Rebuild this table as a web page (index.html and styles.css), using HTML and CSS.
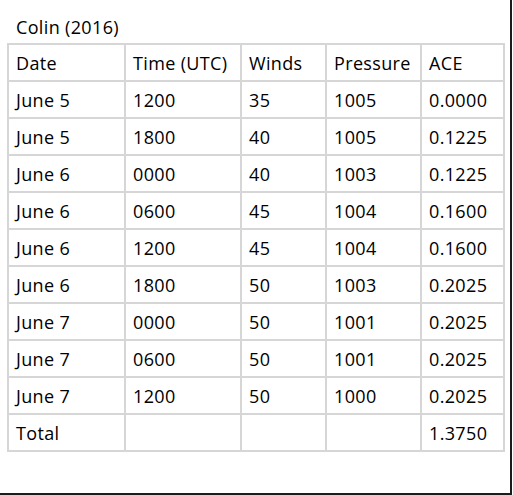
FILE: index.html
```html
<!DOCTYPE html>
<html>
<head>
<meta charset="utf-8">
<link rel="stylesheet" href="styles.css">
</head>
<body>
<div class="frame">
  <div class="caption">Colin (2016)</div>
  <table class="storm">
    <colgroup>
      <col class="c-date"><col class="c-time"><col class="c-winds"><col class="c-pres"><col class="c-ace">
    </colgroup>
    <tr><td>Date</td><td>Time (UTC)</td><td>Winds</td><td>Pressure</td><td>ACE</td></tr>
    <tr><td>June 5</td><td>1200</td><td>35</td><td>1005</td><td>0.0000</td></tr>
    <tr><td>June 5</td><td>1800</td><td>40</td><td>1005</td><td>0.1225</td></tr>
    <tr><td>June 6</td><td>0000</td><td>40</td><td>1003</td><td>0.1225</td></tr>
    <tr><td>June 6</td><td>0600</td><td>45</td><td>1004</td><td>0.1600</td></tr>
    <tr><td>June 6</td><td>1200</td><td>45</td><td>1004</td><td>0.1600</td></tr>
    <tr><td>June 6</td><td>1800</td><td>50</td><td>1003</td><td>0.2025</td></tr>
    <tr><td>June 7</td><td>0000</td><td>50</td><td>1001</td><td>0.2025</td></tr>
    <tr><td>June 7</td><td>0600</td><td>50</td><td>1001</td><td>0.2025</td></tr>
    <tr><td>June 7</td><td>1200</td><td>50</td><td>1000</td><td>0.2025</td></tr>
    <tr><td>Total</td><td></td><td></td><td></td><td>1.3750</td></tr>
  </table>
</div>
</body>
</html>
```
FILE: styles.css
```css
html, body {
  margin: 0;
  padding: 0;
  background: #ffffff;
}
body {
  font-family: "Open Sans", "Liberation Sans", sans-serif;
  font-size: 18px;
  letter-spacing: 0.35px;
  color: #000000;
  -webkit-font-smoothing: none;
}
.frame {
  width: 510px;
  height: 493px;
  border-right: 2px solid #1c1c1c;
  border-bottom: 2px solid #1c1c1c;
  background: #fff;
  overflow: hidden;
}
.caption {
  padding: 16px 0 0 16px;
  height: 27px;
  line-height: 22px;
}
.storm {
  margin-left: 7px;
  border-collapse: collapse;
  table-layout: fixed;
  width: 496px;
}
.c-date { width: 117px; }
.c-time { width: 116px; }
.c-winds { width: 85px; }
.c-pres { width: 95px; }
.c-ace { width: 83px; }
.storm td {
  border: 2px solid #d6d6d6;
  height: 37px;
  box-sizing: border-box;
  padding: 0 0 0 7px;
  white-space: nowrap;
  line-height: 20px;
}
```
